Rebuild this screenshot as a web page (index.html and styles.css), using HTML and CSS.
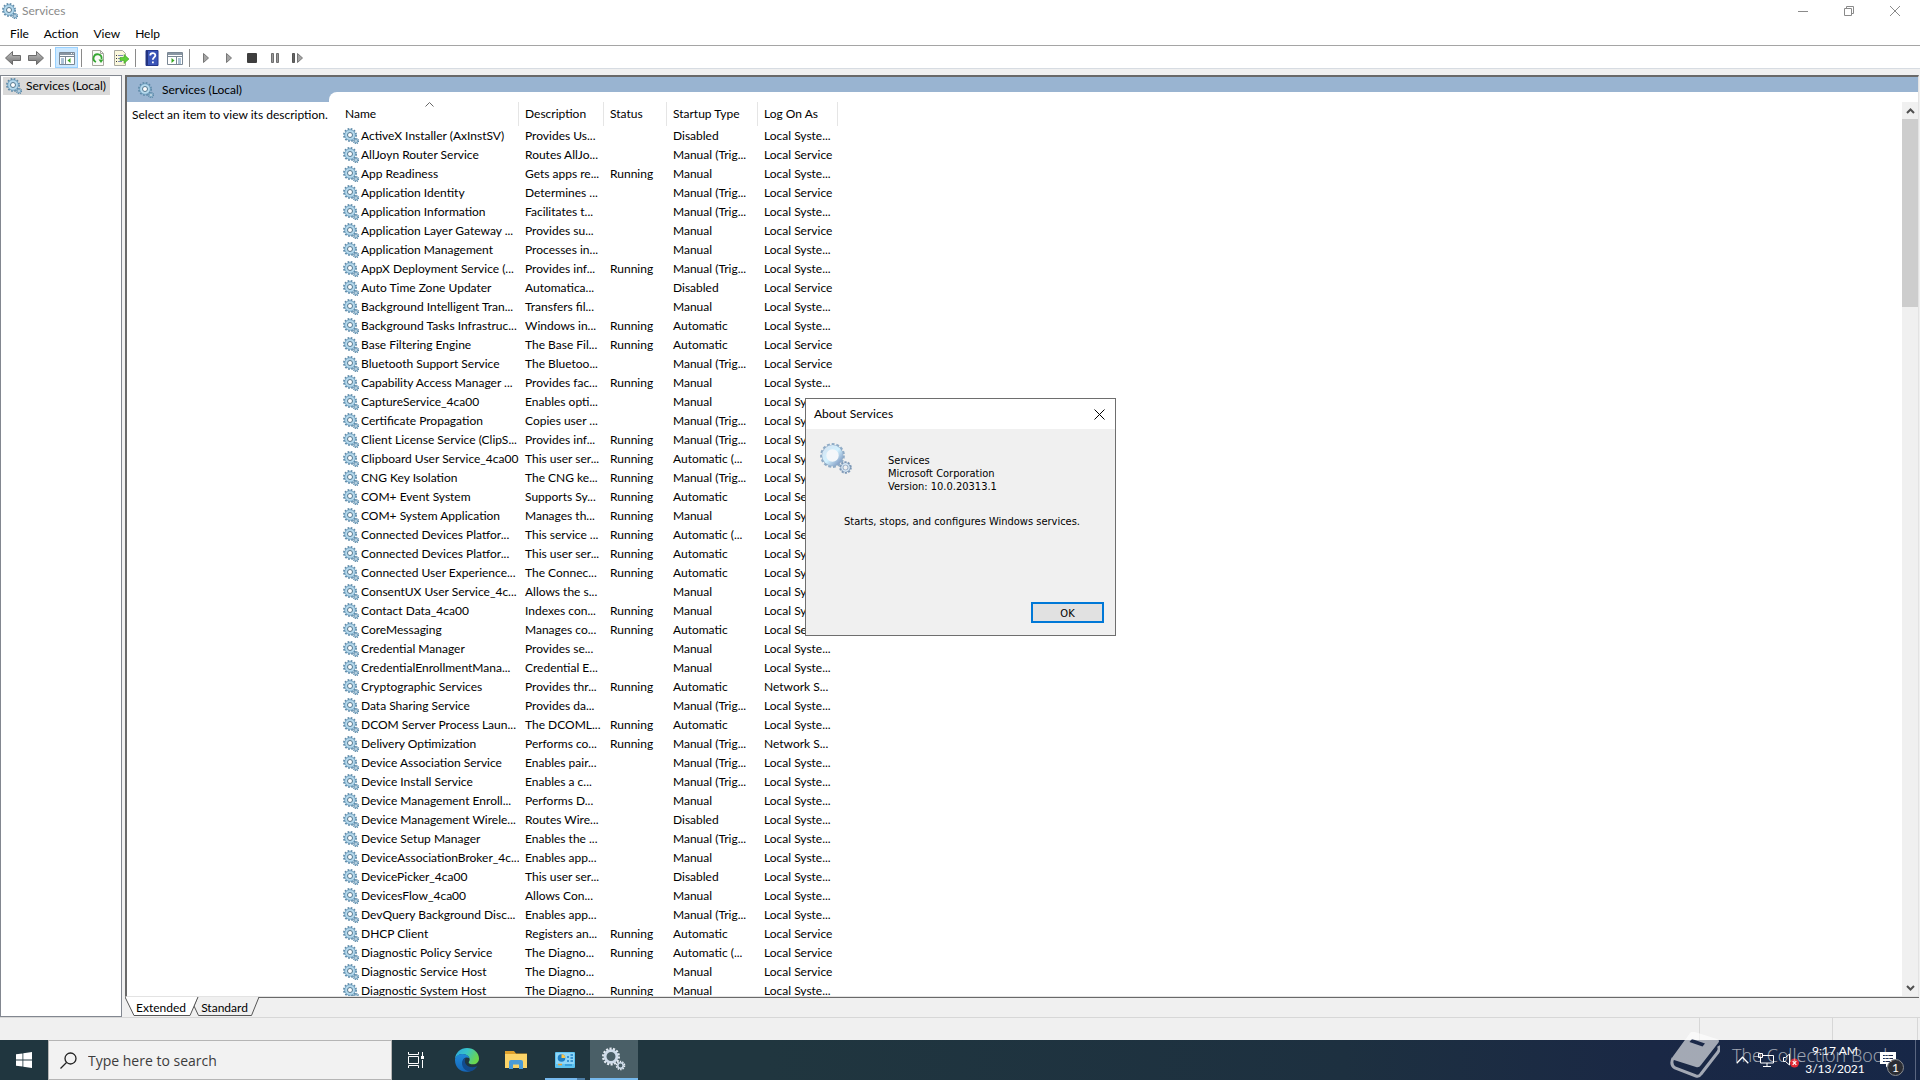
FILE: index.html
```
<!DOCTYPE html>
<html lang="en">
<head>
    <meta charset="UTF-8">
    <title>Services</title>
    <link rel="stylesheet" href="styles.css">
</head>
<body>
    <!-- Shared icons -->
    <svg class="sprite" aria-hidden="true">
        <symbol id="gears" viewBox="0 0 16 16">
            <circle cx="7" cy="7" r="6" fill="none" stroke="#5c88a6" stroke-width="1.900" stroke-dasharray="1.700 1.440"/>
            <circle cx="7" cy="7" r="3.900" fill="#fff" stroke="#b4d8ec" stroke-width="2.800"/>
            <circle cx="7" cy="7" r="5.300" fill="none" stroke="#6a9cbc" stroke-width=".8"/>
            <circle cx="7" cy="7" r="2.500" fill="none" stroke="#55788f" stroke-width="1"/>
            <circle cx="13" cy="13" r="2.500" fill="none" stroke="#5c88a6" stroke-width="1.400" stroke-dasharray="1.100 .860"/>
            <circle cx="13" cy="13" r="1.500" fill="#fff" stroke="#7fa9c4" stroke-width="1.400"/>
        </symbol>
        <symbol id="gears-big" viewBox="0 0 32 32">
            <circle cx="12.5" cy="12.5" r="11.2" fill="none" stroke="#8fabc6" stroke-width="2.4" stroke-dasharray="2.9 1.79"/>
            <circle cx="12.5" cy="12.5" r="8.3" fill="none" stroke="#8fabc6" stroke-width="5"/>
            <circle cx="12.5" cy="12.5" r="8.3" fill="#f4f7fa" stroke="url(#steel)" stroke-width="4.200"/>
            <circle cx="25.5" cy="24.5" r="5.4" fill="none" stroke="#7f9ab8" stroke-width="1.8" stroke-dasharray="2.1 1.29"/>
            <circle cx="25.5" cy="24.5" r="3.6" fill="none" stroke="#7893b2" stroke-width="2.8"/>
            <circle cx="25.5" cy="24.5" r="3.6" fill="none" stroke="#d3e4f3" stroke-width="1.6"/>
        </symbol>
        <linearGradient id="steel" x1="0" y1="0" x2="1" y2="1">
            <stop offset="0" stop-color="#d5e4f2"/><stop offset=".5" stop-color="#d2f1ff"/><stop offset="1" stop-color="#7c97c0"/>
        </linearGradient>
        <linearGradient id="grey" x1="0" y1="0" x2="0" y2="1">
            <stop offset="0" stop-color="#c4c4c4"/><stop offset="1" stop-color="#6e6e6e"/>
        </linearGradient>
    </svg>

    <div class="window">
        <header class="titlebar">
            <svg class="icon"><use href="#gears"/></svg>
            <span>Services</span>
            <div class="window-buttons">
                <button aria-label="Minimize"><svg width="10" height="10"><path d="M0 5.5h10" stroke="#8a8a8a"/></svg></button>
                <button aria-label="Restore"><svg width="10" height="10"><path d="M.5 2.5h7v7h-7zM2.5 2.5v-2h7v7h-2" fill="none" stroke="#8a8a8a"/></svg></button>
                <button aria-label="Close"><svg width="10" height="10"><path d="M0 0l10 10M10 0L0 10" stroke="#8a8a8a"/></svg></button>
            </div>
        </header>

        <nav class="menubar">
            <button>File</button>
            <button>Action</button>
            <button>View</button>
            <button>Help</button>
        </nav>

        <div class="toolbar">
            <button aria-label="Back"><svg class="icon" viewBox="0 0 16 16"><path d="M.5 8l7-6.5v4h8v5h-8v4z" fill="url(#grey)" stroke="#6b6b6b"/></svg></button>
            <button aria-label="Forward"><svg class="icon" viewBox="0 0 16 16"><path d="M15.500 8l-7-6.500v4h-8v5h8v4z" fill="url(#grey)" stroke="#6b6b6b"/></svg></button>
            <span class="sep"></span>
            <button class="active" aria-label="Show or hide console tree"><svg class="icon" viewBox="0 0 16 16"><path d="M.5 2.500h15v12H.5z" fill="#fff" stroke="#7a8794"/><path d="M1 3h14v2H1z" fill="#8996a3"/><path d="M1 6.500h14M6.500 7v7" stroke="#7a8794"/><path d="M2 9h3M2 11h3M2 13h3" stroke="#5b85ac"/><path d="M11.500 8v5L8.500 10.500z" fill="#36a820"/><path d="M12 3.500h1M14 3.500h.6" stroke="#fff"/></svg></button>
            <span class="sep"></span>
            <button aria-label="Refresh"><svg class="icon" viewBox="0 0 16 16"><path d="M2.500.5h8l3 3v12h-11z" fill="#fbfbf8" stroke="#a8a8a0"/><path d="M10.500.5v3h3" fill="none" stroke="#a8a8a0"/><path d="M6 12A4 4 0 1 1 11.500 9" fill="none" stroke="#36a832" stroke-width="1.800"/><path d="M8.500 9.500h5l-2.500 3.500z" fill="#36a832"/></svg></button>
            <button aria-label="Export list"><svg class="icon" viewBox="0 0 16 16"><path d="M1.500.5h8l3 3v12h-11z" fill="#fbf8dc" stroke="#a8a8a0"/><path d="M3 5.500h1M3 8.500h1M3 11.500h1" stroke="#333"/><path d="M5 5.500h5M5 8.500h3M5 11.500h4" stroke="#7c86b8"/><path d="M7 7.500h4v-3l5 4.500-5 4.500v-3H7z" fill="#5fcf3a" stroke="#3da324" stroke-width=".6"/></svg></button>
            <span class="sep"></span>
            <button aria-label="Help"><svg class="icon" viewBox="0 0 16 16"><path d="M2 .5h12v15H2z" fill="#3b55b8" stroke="#26388c"/><path d="M2 1h2v14H2z" fill="#22337f"/><path d="M6.200 5.500C6.200 2.300 11.300 2.300 11.300 5.400c0 1.900-2.500 2-2.500 4.300" fill="none" stroke="#fff" stroke-width="1.800"/><path d="M8 11.500h1.800v1.800H8z" fill="#fff"/></svg></button>
            <button aria-label="Show or hide action pane"><svg class="icon" viewBox="0 0 16 16"><path d="M.5 2.500h15v12H.5z" fill="#fff" stroke="#7a8794"/><path d="M1 3h14v2H1z" fill="#8996a3"/><path d="M1 6.500h14M9.500 7v7" stroke="#7a8794"/><path d="M11 9h3M11 11h3M11 13h3" stroke="#5b85ac"/><path d="M4.500 8v5l3-2.500z" fill="#36a820"/></svg></button>
            <span class="sep"></span>
            <button aria-label="Start service"><svg class="icon" viewBox="0 0 16 16"><path d="M5.500 3.500v9l5-4.500z" fill="#a5a5a5" stroke="#777"/></svg></button>
            <button aria-label="Start"><svg class="icon" viewBox="0 0 16 16"><path d="M5.500 3.500v9l5-4.500z" fill="#a5a5a5" stroke="#777"/></svg></button>
            <button aria-label="Stop service"><svg class="icon" viewBox="0 0 16 16"><rect x="3" y="3" width="10" height="10" rx="1" fill="#3e3e3e"/></svg></button>
            <button aria-label="Pause service"><svg class="icon" viewBox="0 0 16 16"><path d="M4.500 3.500h2v9h-2zM9.500 3.500h2v9h-2z" fill="#999" stroke="#6e6e6e"/></svg></button>
            <button aria-label="Restart service"><svg class="icon" viewBox="0 0 16 16"><path d="M2.500 3.500h2v9h-2z" fill="#666" stroke="#555"/><path d="M7.500 3.500v9l5-4.500z" fill="#a5a5a5" stroke="#777"/></svg></button>
        </div>

        <main class="console">
            <aside class="tree">
                <a class="tree-item" href="#"><svg class="icon"><use href="#gears"/></svg>Services (Local)</a>
            </aside>

            <section class="detail">
                <div class="view">
                    <div class="description">
                        <h1><svg class="icon"><use href="#gears"/></svg>Services (Local)</h1>
                        <p>Select an item to view its description.</p>
                    </div>
                    <div class="list">
                        <table>
                            <thead>
                                <tr>
                                    <th class="col-name">Name<svg class="sort" width="9" height="5"><path d="M.5 4.500l4-4 4 4" fill="none" stroke="#666"/></svg></th>
                                    <th class="col-desc">Description</th>
                                    <th class="col-status">Status</th>
                                    <th class="col-startup">Startup Type</th>
                                    <th class="col-logon">Log On As</th>
                                </tr>
                            </thead>
                            <tbody id="services"></tbody>
                        </table>
                        <div class="scrollbar">
                            <button aria-label="Scroll up"><svg width="9" height="6"><path d="M1 5l3.500-3.500L8 5" fill="none" stroke="#505050" stroke-width="2"/></svg></button>
                            <div class="thumb"></div>
                            <button aria-label="Scroll down"><svg width="9" height="6"><path d="M1 1l3.500 3.500L8 1" fill="none" stroke="#505050" stroke-width="2"/></svg></button>
                        </div>
                    </div>
                </div>
                <div class="tabs">
                    <button class="tab tab-extended"><svg width="74" height="20"><path d="M0 0l9 18.500h56L73 0" fill="#fff" stroke="#555"/></svg><span>Extended</span></button>
                    <button class="tab tab-standard"><svg width="68" height="20"><path d="M4.500 0L1 9l4.500 9.500h53L66 0" fill="#f0f0f0" stroke="#555"/></svg><span>Standard</span></button>
                </div>
            </section>
        </main>

        <footer class="statusbar">
            <span class="pane"></span>
            <span class="pane pane-mid"></span>
            <span class="pane pane-end"></span>
        </footer>
    </div>

    <div class="dialog" role="dialog" aria-labelledby="about-title">
        <div class="dialog-title">
            <span id="about-title">About Services</span>
            <button aria-label="Close"><svg width="11" height="11"><path d="M.5.5l10 10M10.500.5l-10 10" stroke="#000"/></svg></button>
        </div>
        <div class="dialog-body">
            <div class="about">
                <svg class="about-icon"><use href="#gears-big"/></svg>
                <p>Services<br>Microsoft Corporation<br>Version: 10.0.20313.1</p>
            </div>
            <p class="about-text">Starts, stops, and configures Windows services.</p>
            <button class="ok">OK</button>
        </div>
    </div>

    <div class="taskbar">
        <button class="start" aria-label="Start"><svg width="16" height="16"><path d="M0 2.300L6.500 1.400V7.600H0zM7.300 1.300L16 0v7.600H7.300zM0 8.400h6.500v6.200L0 13.700zM7.300 8.400H16V16l-8.700-1.200z" fill="#fff"/></svg></button>
        <label class="search">
            <svg width="17" height="17"><circle cx="10.500" cy="6.500" r="5.500" fill="none" stroke="#222" stroke-width="1.300"/><path d="M6.500 10.500L.5 16.500" stroke="#222" stroke-width="1.300"/></svg>
            <input type="text" placeholder="Type here to search" aria-label="Type here to search">
        </label>
        <div class="tasks">
            <button class="task" aria-label="Task View"><svg width="16" height="16"><path d="M.5 0v2.500h10V0M.5 16v-2.500h10V16M.5 4.500h10v7H.5zM14.500 0v4M14.500 8v8" fill="none" stroke="#fff"/><path d="M13 4h3v3h-3z" fill="#fff"/></svg></button>
            <button class="task" aria-label="Microsoft Edge">
                <svg width="24" height="24" viewBox="0 0 24 24">
                    <defs>
                        <linearGradient id="edge-top" x1="0" y1="0" x2="1" y2=".4"><stop offset="0" stop-color="#2aa5e0"/><stop offset=".5" stop-color="#38c4c8"/><stop offset="1" stop-color="#6ad64e"/></linearGradient>
                        <linearGradient id="edge-low" x1="0" y1="0" x2="0" y2="1"><stop offset="0" stop-color="#1f8ad8"/><stop offset="1" stop-color="#1566b8"/></linearGradient>
                    </defs>
                    <path d="M0 11C.4 4.500 5.600 0 12 0c7 0 12 5 12 10.500 0 3.500-2.600 5.800-6 5.800-2.800 0-4.300-1-4.300-1.900 0-.7 1-1 1-2.800C14.700 8.600 11.600 6 7.500 6 4 6 1.200 8 0 11z" fill="url(#edge-top)"/>
                    <path d="M0 11c1-3.200 4-5 7.500-5 3.600 0 6.200 1.900 7 4-5.200-2.200-8 2-6.200 6.500 1.300 3.400 5 6 9.200 5.400C10.500 26.500 0 22.500 0 12z" fill="url(#edge-low)"/>
                    <path d="M9 10.500c-4.500 4.500-1 12.500 6 13.100 3.500-.8 6-3 7.400-5.600-3.400 2-9.400 1.500-11.600-2-1.100-1.700-1.200-4-.2-6z" fill="#124b8d"/>
                </svg>
            </button>
            <button class="task" aria-label="File Explorer">
                <svg width="22" height="18"><path d="M0 0h9l2 2.500h11V7H0z" fill="#dfa12c"/><path d="M0 3h22v14H0z" fill="#fcd468"/><path d="M4 18v-7q0-2 2-2h10q2 0 2 2v7h-4v-4.500H8V18z" fill="#4a9bd8"/></svg>
            </button>
            <button class="task open" aria-label="Control Panel">
                <svg width="20" height="16"><rect width="20" height="16" rx="1" fill="#5cc3f0"/><path d="M1 1h18v11H1z" fill="#8fd6f7"/><circle cx="6.500" cy="6" r="3.800" fill="#1f7fc4"/><path d="M6.500 6V2.200A3.800 3.800 0 0 1 10.300 6z" fill="#f8c54a"/><path d="M12 5h2M12 9h2M15.500 3h2.500M15.500 6h2.500M15.500 9h2.500" stroke="#1f7fc4" stroke-width="1.500"/><path d="M3 12.500h4" stroke="#f0a030" stroke-width="1.500"/><path d="M10 13h7" stroke="#1f7fc4"/></svg>
            </button>
            <button class="task current" aria-label="Services">
                <svg width="24" height="24" viewBox="0 0 24 24"><circle cx="9" cy="9.500" r="7.800" fill="none" stroke="#e4ebf2" stroke-width="2.400" stroke-dasharray="2.100 1.400"/><circle cx="9" cy="9.500" r="5.900" fill="none" stroke="#cfdcea" stroke-width="2.800"/><circle cx="18.500" cy="18.500" r="4" fill="none" stroke="#e4ebf2" stroke-width="1.600" stroke-dasharray="1.500 1.010"/><circle cx="18.500" cy="18.500" r="2.700" fill="none" stroke="#cfdcea" stroke-width="1.600"/></svg>
            </button>
        </div>
        <div class="tray">
            <button aria-label="Show hidden icons"><svg width="13" height="8"><path d="M.7 7.300l5.800-6 5.800 6" fill="none" stroke="#fff" stroke-width="1.300"/></svg></button>
            <button aria-label="Network"><svg width="16" height="14"><path d="M4 2.500h11.500v7.500H2.500V6M9 10v3M5 13.500h8" fill="none" stroke="#fff"/><path d="M.5.5h4v4h-4zM2.500 4.500v3" fill="#1c2a4b" stroke="#fff"/></svg></button>
            <button aria-label="Volume"><svg width="16" height="15"><path d="M.5 4.500h2l4-3.500v11l-4-3.500h-2z" fill="none" stroke="#fff"/><circle cx="11.500" cy="10" r="4.500" fill="#e02b35"/><path d="M9.700 8.200l3.600 3.600M13.300 8.200l-3.600 3.600" stroke="#fff" stroke-width="1.200"/></svg></button>
        </div>
        <button class="clock">9:17 AM<br>3/13/2021</button>
        <button class="notifications" aria-label="Notifications">
            <svg width="16" height="16"><path d="M0 0h16v12H9l-3 3.500V12H0z" fill="#fff"/><path d="M3 3.500h10M3 6.500h10M3 9.500h7" stroke="#1c2a4b"/></svg>
            <span class="badge">1</span>
        </button>
        <span class="show-desktop"></span>
    </div>

    <div class="watermark">
        <svg width="50" height="46"><path d="M20 1Q22-1 25 0l22 7q3 1 1.500 3.500L31 33q-2 3-5 2L4 28q-3-1-1.500-3z" fill="#fff"/><path d="M22 7l13 4.500-2.500 3L19.500 10z" fill="#1c2a4b"/><path d="M3 26Q0 33 5 36l21 8q3 1 5-2l17-22q2-3 .5-6" fill="none" stroke="#fff" stroke-width="3"/></svg>
        <span>The Collection Book</span>
    </div>

    <script src="services.js"></script>
</body>
</html>
```
FILE: styles.css
```
* {
    box-sizing: border-box;
}

body {
    margin: 0;
    height: 100vh;
    display: flex;
    flex-direction: column;
    overflow: hidden;
    background: #f0f0f0;
    color: #000;
    font-family: Lato, "Open Sans", sans-serif;
    font-size: 12px;
    line-height: 16px;
}

button {
    display: flex;
    align-items: center;
    justify-content: center;
    padding: 0;
    border: none;
    background: none;
    color: inherit;
    font: inherit;
}

p {
    margin: 0;
}

.sprite {
    position: absolute;
    width: 0;
    height: 0;
}

.icon {
    width: 16px;
    height: 16px;
    flex: none;
}

/* Window */
.window {
    flex: 1;
    min-height: 0;
    display: flex;
    flex-direction: column;
}

.titlebar {
    display: flex;
    align-items: center;
    gap: 4px;
    height: 22px;
    padding: 0 2px;
    background: #fff;
    color: #8a8a8a;
}

.window-buttons {
    display: flex;
    margin-left: auto;
}

.window-buttons button {
    width: 46px;
    height: 20px;
}

.menubar {
    display: flex;
    height: 24px;
    padding-left: 2px;
    background: #fff;
    border-bottom: 1px solid #a5a5a5;
}

.menubar button {
    padding: 0 7px 0 8px;
}

.toolbar {
    display: flex;
    align-items: center;
    height: 23px;
    padding: 1px 0 0 1px;
    background: #fff;
    border-bottom: 1px solid #d7dce2;
}

.toolbar button {
    width: 23px;
    height: 21px;
}

.toolbar .active {
    background: #cce8ff;
    border: 1px solid #99d1ff;
}

.sep {
    width: 8px;
    height: 18px;
    background: linear-gradient(#8a8a8a, #8a8a8a) 3px 0 / 1px 100% no-repeat;
}

.console {
    flex: 1;
    min-height: 0;
    display: flex;
    gap: 3px;
    padding: 6px 1px 0 0;
}

.tree {
    width: 122px;
    padding: 1px 2px;
    background: #fff;
    border: 1px solid #828790;
}

.tree-item {
    display: inline-flex;
    align-items: center;
    gap: 4px;
    height: 18px;
    padding: 0 4px 0 3px;
    background: #d9d9d9;
    color: #000;
    text-decoration: none;
    white-space: nowrap;
}

.detail {
    flex: 1;
    min-width: 0;
    display: flex;
    flex-direction: column;
}

.view {
    flex: 1;
    min-height: 0;
    display: flex;
    background: #99b4d1;
    border: 1px solid #e3e3e3;
    border-top: 2px solid #696969;
    border-left: 2px solid #696969;
}

.description {
    width: 202px;
    background: #fff;
    white-space: nowrap;
}

.description h1 {
    display: flex;
    align-items: center;
    gap: 8px;
    height: 25px;
    margin: 0;
    padding-left: 11px;
    background: #99b4d1;
    font-size: 12px;
    font-weight: normal;
}

.description p {
    padding: 5px;
}

.list {
    flex: 1;
    min-width: 0;
    display: flex;
    justify-content: space-between;
    margin-top: 15px;
    padding: 10px 0 0 8px;
    background: #fff;
    border-top-left-radius: 8px;
    overflow: hidden;
}

/* Services table */
table {
    table-layout: fixed;
    width: 501px;
    height: max-content;
    border-collapse: separate;
    border-spacing: 0;
    white-space: nowrap;
}

th, td {
    padding: 0 0 0 6px;
    text-align: left;
    font-weight: normal;
    overflow: hidden;
}

th {
    height: 24px;
    border-right: 1px solid #e5e5e5;
}

td {
    height: 19px;
}

.col-name {
    position: relative;
    width: 182px;
    padding-left: 8px;
}

.col-desc {
    width: 85px;
}

.col-status {
    width: 63px;
}

.col-startup {
    width: 91px;
}

.col-logon {
    width: 80px;
}

.sort {
    position: absolute;
    top: 0;
    left: 88px;
}

.service {
    display: flex;
    align-items: center;
    gap: 2px;
}

.scrollbar {
    display: flex;
    flex-direction: column;
    width: 16px;
    background: #f0f0f0;
}

.scrollbar button {
    width: 16px;
    height: 17px;
}

.scrollbar button:last-child {
    margin-top: auto;
}

.thumb {
    height: 21%;
    background: #cdcdcd;
}

/* Extended / Standard tabs */
.tabs {
    display: flex;
    height: 20px;
    border-top: 1px solid #696969;
}

.tab {
    position: relative;
    height: 20px;
}

.tab svg {
    position: absolute;
    top: -1px;
    left: 0;
}

.tab span {
    position: relative;
}

.tab-extended {
    z-index: 1;
    width: 68px;
    padding-left: 4px;
}

.tab-standard {
    width: 68px;
    padding-right: 5px;
}

.statusbar {
    display: flex;
    height: 23px;
    padding-right: 2px;
    border-top: 1px solid #d7d7d7;
}

.pane {
    flex: 1;
    border-right: 1px solid #d7d7d7;
}

.pane-mid {
    flex: none;
    width: 133px;
}

.pane-end {
    flex: none;
    width: 85px;
}

/* About dialog */
.dialog {
    position: absolute;
    top: 398px;
    left: 805px;
    width: 311px;
    border: 1px solid #6e6e6e;
    background: #f0f0f0;
}

.dialog-title {
    display: flex;
    align-items: center;
    justify-content: space-between;
    height: 30px;
    padding: 0 10px 0 8px;
    background: #fff;
}

.dialog-body {
    padding: 14px 11px 12px 14px;
    font-family: "DejaVu Sans Condensed", "DejaVu Sans", sans-serif;
    font-size: 11px;
    line-height: 13px;
}

.about {
    display: flex;
    gap: 36px;
}

.about-icon {
    width: 32px;
    height: 32px;
}

.about p {
    padding-top: 11px;
}

.about-text {
    margin: 22px 0 74px;
    text-align: center;
}

.ok {
    width: 73px;
    height: 21px;
    padding-top: 1px;
    margin-left: auto;
    border: 2px solid #0078d7;
    background: #e1e1e1;
}

/* Taskbar */
.taskbar {
    display: flex;
    height: 40px;
    background: linear-gradient(90deg, #20363f, #20363f 40%, #1d3040 70%, #1a2845 86%, #172747);
    color: #fff;
}

.start {
    width: 48px;
}

.search {
    display: flex;
    align-items: center;
    gap: 11px;
    width: 344px;
    padding-left: 11px;
    background: #f2f2f2;
    border: 1px solid #b5b5b5;
}

.search input {
    flex: 1;
    min-width: 0;
    padding: 0;
    border: none;
    outline: none;
    background: none;
    font-family: "Open Sans", sans-serif;
    font-size: 14px;
}

.search input::placeholder {
    color: #3c3c3c;
}

.tasks {
    display: flex;
    gap: 1px;
    padding-left: 2px;
}

.task {
    width: 48px;
}

.task:first-child {
    padding-right: 4px;
}

.open {
    background: linear-gradient(90deg, #76b9ed 80%, #4d7ea6 80%) 4px 100% / 40px 2px no-repeat;
}

.current {
    background: #4a5f67;
    border-bottom: 2px solid #76b9ed;
}

.tray {
    display: flex;
    gap: 9px;
    margin-left: auto;
}

.clock {
    width: 72px;
    line-height: 18px;
}

.notifications {
    position: relative;
    width: 44px;
    padding-right: 10px;
}

.badge {
    position: absolute;
    top: 19px;
    left: 16px;
    width: 17px;
    height: 17px;
    border: 1px solid #8a8d92;
    border-radius: 50%;
    background: #2b2d33;
    line-height: 15px;
}

.show-desktop {
    width: 5px;
    border-left: 1px solid #5a6680;
}

.watermark {
    position: absolute;
    right: 28px;
    bottom: 2px;
    display: flex;
    align-items: center;
    gap: 12px;
    color: #fff;
    font: 300 18px/24px "Open Sans", sans-serif;
    opacity: .6;
    pointer-events: none;
}
```
FILE: services.js
```
// name, description, status, startup type, log on as
const services = [
    ["ActiveX Installer (AxInstSV)", "Provides Us...", "", "Disabled", "Local Syste..."],
    ["AllJoyn Router Service", "Routes AllJo...", "", "Manual (Trig...", "Local Service"],
    ["App Readiness", "Gets apps re...", "Running", "Manual", "Local Syste..."],
    ["Application Identity", "Determines ...", "", "Manual (Trig...", "Local Service"],
    ["Application Information", "Facilitates t...", "", "Manual (Trig...", "Local Syste..."],
    ["Application Layer Gateway ...", "Provides su...", "", "Manual", "Local Service"],
    ["Application Management", "Processes in...", "", "Manual", "Local Syste..."],
    ["AppX Deployment Service (...", "Provides inf...", "Running", "Manual (Trig...", "Local Syste..."],
    ["Auto Time Zone Updater", "Automatica...", "", "Disabled", "Local Service"],
    ["Background Intelligent Tran...", "Transfers fil...", "", "Manual", "Local Syste..."],
    ["Background Tasks Infrastruc...", "Windows in...", "Running", "Automatic", "Local Syste..."],
    ["Base Filtering Engine", "The Base Fil...", "Running", "Automatic", "Local Service"],
    ["Bluetooth Support Service", "The Bluetoo...", "", "Manual (Trig...", "Local Service"],
    ["Capability Access Manager ...", "Provides fac...", "Running", "Manual", "Local Syste..."],
    ["CaptureService_4ca00", "Enables opti...", "", "Manual", "Local Syste..."],
    ["Certificate Propagation", "Copies user ...", "", "Manual (Trig...", "Local Syste..."],
    ["Client License Service (ClipS...", "Provides inf...", "Running", "Manual (Trig...", "Local Syste..."],
    ["Clipboard User Service_4ca00", "This user ser...", "Running", "Automatic (...", "Local Syste..."],
    ["CNG Key Isolation", "The CNG ke...", "Running", "Manual (Trig...", "Local Syste..."],
    ["COM+ Event System", "Supports Sy...", "Running", "Automatic", "Local Service"],
    ["COM+ System Application", "Manages th...", "Running", "Manual", "Local Syste..."],
    ["Connected Devices Platfor...", "This service ...", "Running", "Automatic (...", "Local Service"],
    ["Connected Devices Platfor...", "This user ser...", "Running", "Automatic", "Local Syste..."],
    ["Connected User Experience...", "The Connec...", "Running", "Automatic", "Local Syste..."],
    ["ConsentUX User Service_4c...", "Allows the s...", "", "Manual", "Local Syste..."],
    ["Contact Data_4ca00", "Indexes con...", "Running", "Manual", "Local Syste..."],
    ["CoreMessaging", "Manages co...", "Running", "Automatic", "Local Service"],
    ["Credential Manager", "Provides se...", "", "Manual", "Local Syste..."],
    ["CredentialEnrollmentMana...", "Credential E...", "", "Manual", "Local Syste..."],
    ["Cryptographic Services", "Provides thr...", "Running", "Automatic", "Network S..."],
    ["Data Sharing Service", "Provides da...", "", "Manual (Trig...", "Local Syste..."],
    ["DCOM Server Process Laun...", "The DCOML...", "Running", "Automatic", "Local Syste..."],
    ["Delivery Optimization", "Performs co...", "Running", "Manual (Trig...", "Network S..."],
    ["Device Association Service", "Enables pair...", "", "Manual (Trig...", "Local Syste..."],
    ["Device Install Service", "Enables a c...", "", "Manual (Trig...", "Local Syste..."],
    ["Device Management Enroll...", "Performs D...", "", "Manual", "Local Syste..."],
    ["Device Management Wirele...", "Routes Wire...", "", "Disabled", "Local Syste..."],
    ["Device Setup Manager", "Enables the ...", "", "Manual (Trig...", "Local Syste..."],
    ["DeviceAssociationBroker_4c...", "Enables app...", "", "Manual", "Local Syste..."],
    ["DevicePicker_4ca00", "This user ser...", "", "Disabled", "Local Syste..."],
    ["DevicesFlow_4ca00", "Allows Con...", "", "Manual", "Local Syste..."],
    ["DevQuery Background Disc...", "Enables app...", "", "Manual (Trig...", "Local Syste..."],
    ["DHCP Client", "Registers an...", "Running", "Automatic", "Local Service"],
    ["Diagnostic Policy Service", "The Diagno...", "Running", "Automatic (...", "Local Service"],
    ["Diagnostic Service Host", "The Diagno...", "", "Manual", "Local Service"],
    ["Diagnostic System Host", "The Diagno...", "Running", "Manual", "Local Syste..."]
];

const icon = '<svg class="icon"><use href="#gears"/></svg>';

document.getElementById("services").innerHTML = services.map(([name, ...cells]) =>
    `<tr><td><div class="service">${icon}<span>${name}</span></div></td>` +
    cells.map(cell => `<td>${cell}</td>`).join("") + "</tr>"
).join("");
```
